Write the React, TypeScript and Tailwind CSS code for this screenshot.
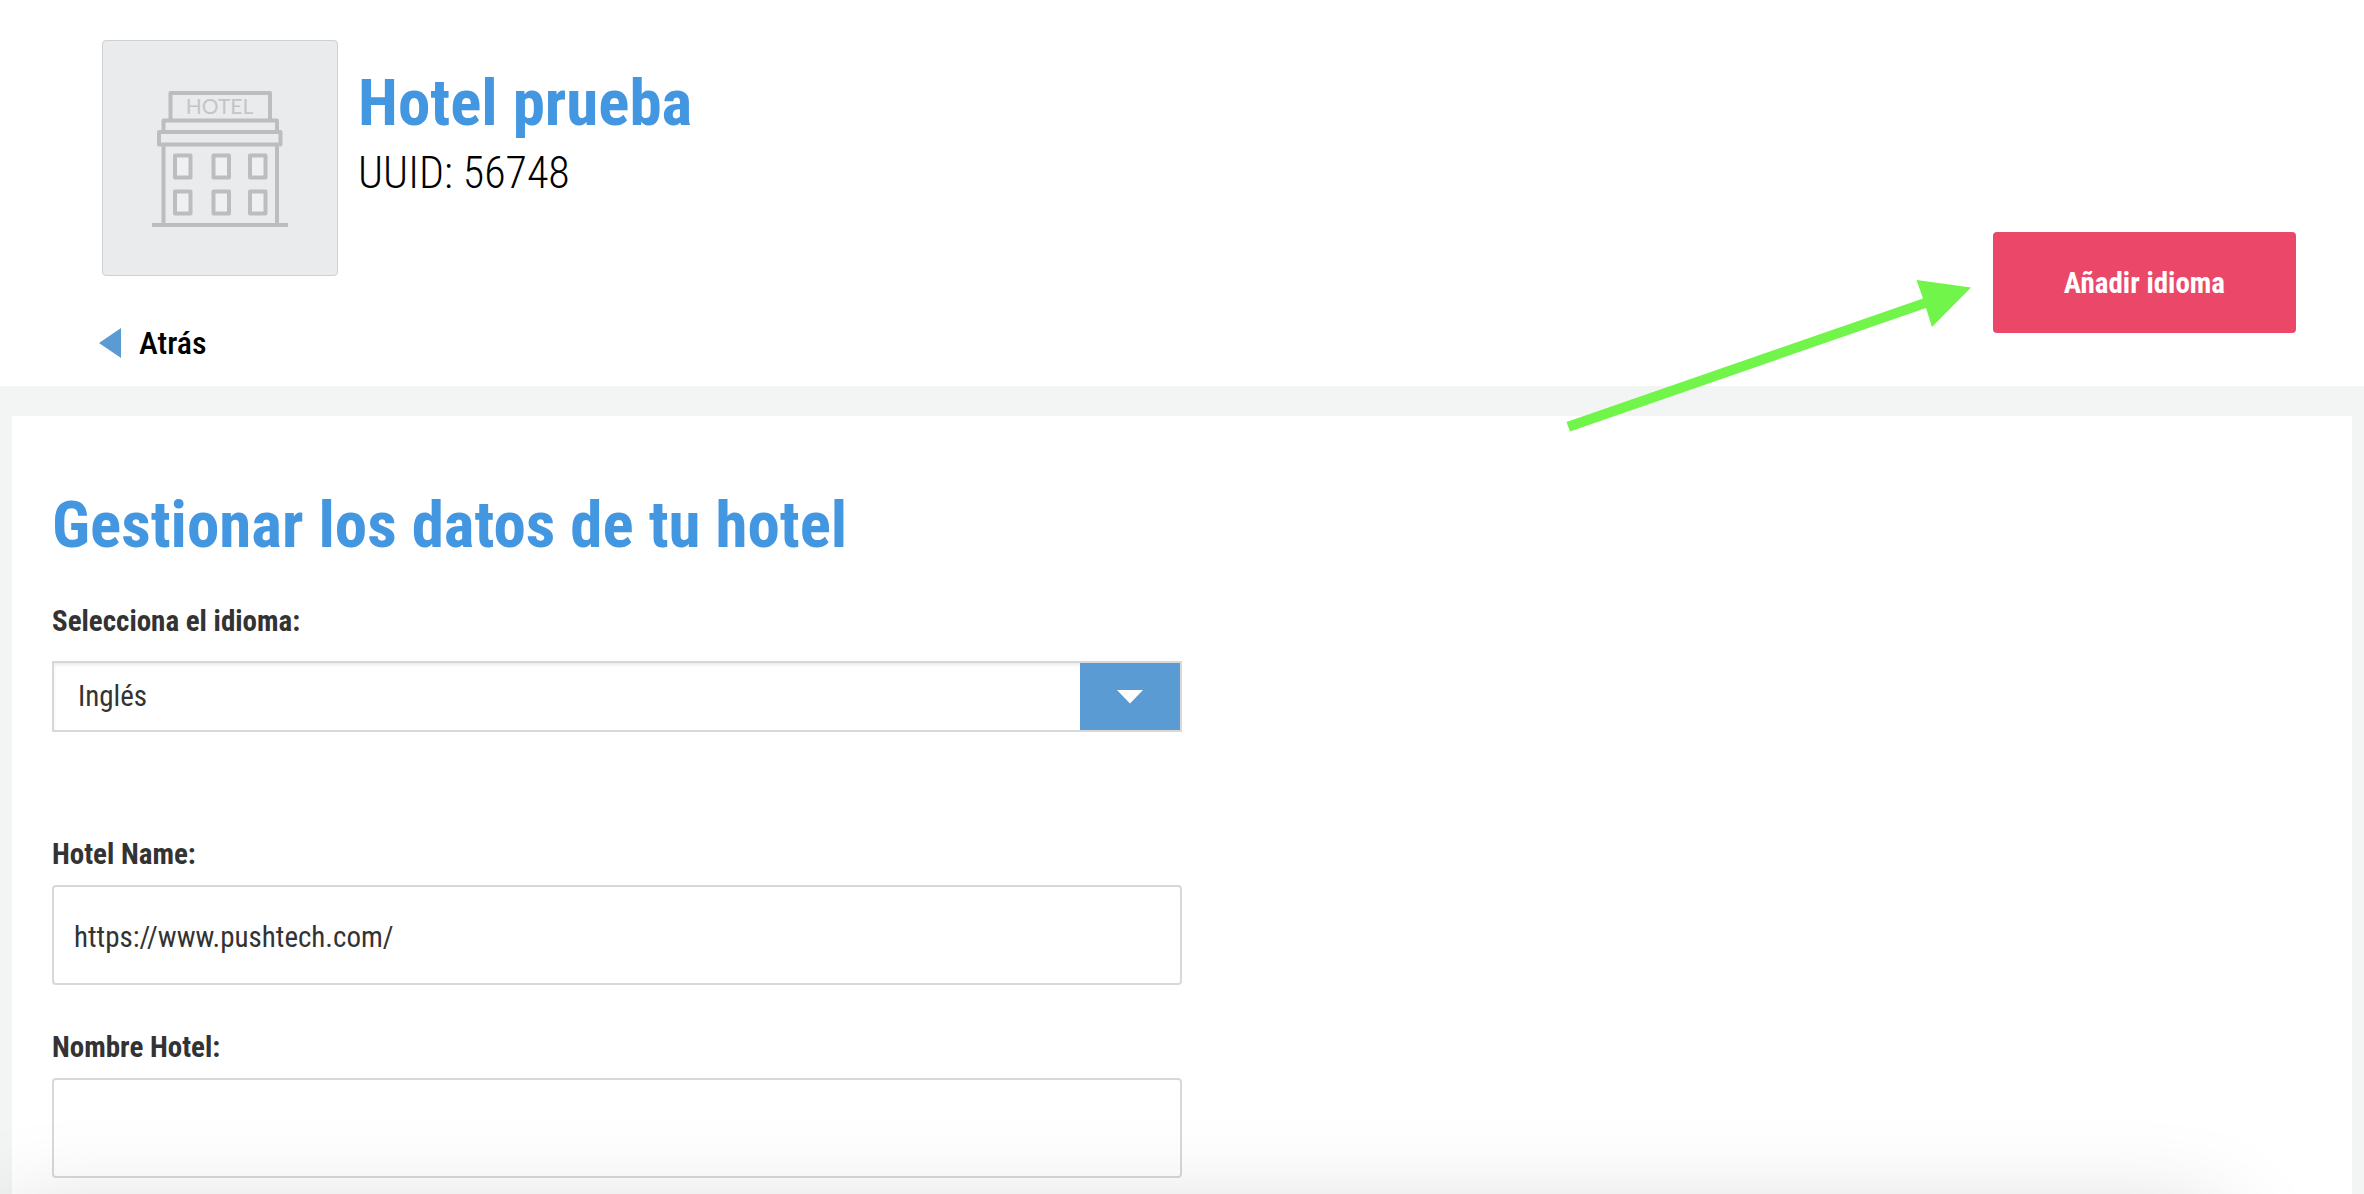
import React, { useState } from 'react';

const HotelIcon: React.FC = () => (
    <svg className="h-[138px] w-[138px]" viewBox="0 -1 138 138" fill="none" stroke="#bcbdbf" strokeWidth="4" strokeLinejoin="round" aria-hidden="true">
        <path d="M19.5 29V3h99.500v26" />
        <path d="M12.500 43V30.500h113.500V43" />
        <path d="M8 42h121.500v12.500H8z" />
        <path d="M12.500 55v79M126 55v79" />
        <path d="M1 135h136" />
        <g fill="#eff0f2">
            <path d="M24 65.500h15.500v22H24zM62.500 65.500H78v22H62.500zM99 65.500h15.500v22H99z" />
            <path d="M24 101.500h15.500v22H24zM62.500 101.500H78v22H62.500zM99 101.500h15.500v22H99z" />
        </g>
        <text x="68.500" y="23.500" textAnchor="middle" fontFamily="Lato, sans-serif" fontSize="21" fill="#c4c5c7" stroke="none">HOTEL</text>
    </svg>
);

// Green pointer that leads the eye to the "Añadir idioma" button
const Arrow: React.FC = () => (
    <svg className="pointer-events-none absolute -left-[427px] top-[46px] h-[154px] w-[406px]" viewBox="0 0 406 154" fill="#72f54a" aria-hidden="true">
        <path d="M0.500 144L357 20.500 350.500 2 405 9.500 366 49 360 30 4 153.500z" />
    </svg>
);

interface TextFieldProps {
    id: string;
    label: string;
    value: string;
    onChange: (value: string) => void;
}

const TextField: React.FC<TextFieldProps> = ({ id, label, value, onChange }) => (
    <div className="flex flex-col gap-[11px]">
        <label htmlFor={id} className="text-[29px] leading-10 font-bold">{label}</label>
        <input
            id={id}
            type="text"
            value={value}
            onChange={(e) => onChange(e.target.value)}
            className="h-[100px] w-full rounded-sm border-2 border-[#d8d8d8] bg-white px-5 pt-1 text-[29px] outline-none"
        />
    </div>
);

const App: React.FC = () => {
    const [language, setLanguage] = useState<string>('en');
    const [hotelName, setHotelName] = useState<string>('https://www.pushtech.com/');
    const [nombreHotel, setNombreHotel] = useState<string>('');

    return (
        <div className="flex min-h-screen flex-col bg-[#f3f5f4] font-['Roboto_Condensed','Roboto',sans-serif] text-[#333333]">
            <header className="flex items-end justify-between bg-white pt-10 pr-[68px] pb-[19px] pl-[102px]">
                <div>
                    <div className="flex gap-5">
                        <div className="flex h-[236px] w-[236px] items-center justify-center rounded-sm border border-[#cfd0d2] bg-[#eaebed]">
                            <HotelIcon />
                        </div>
                        <div className="pt-[25px]">
                            <h1 className="text-[65px] leading-[76px] font-bold text-[#4396e0]">Hotel prueba</h1>
                            <p className="text-[44px] leading-[64px] font-light text-black">UUID: 56748</p>
                        </div>
                    </div>
                    <a href="#" className="-ml-[3px] mt-[43px] flex items-center gap-[18px] text-[32px] leading-[48px] font-medium text-black">
                        <svg className="h-[30px] w-[22px]" viewBox="0 0 22 30" fill="#5a9bd3" aria-hidden="true">
                            <path d="M22 0v30L0 15z" />
                        </svg>
                        Atrás
                    </a>
                </div>
                <div className="relative mb-[34px]">
                    <Arrow />
                    <button type="button" className="h-[101px] rounded-sm bg-[#eb4869] px-[71px] pt-0.5 text-[29px] font-bold text-white">Añadir idioma</button>
                </div>
            </header>

            <main className="mx-3 mt-[30px] flex-1 bg-white px-10 pt-[69px] pb-[15px]">
                <h2 className="text-[65px] leading-[80px] font-bold text-[#4396e0]">Gestionar los datos de tu hotel</h2>
                <form className="mt-9 w-1/2">
                    <div className="mb-[102px] flex flex-col gap-5">
                        <label htmlFor="language" className="text-[29px] leading-10 font-bold">Selecciona el idioma:</label>
                        <div className="relative">
                            <select
                                id="language"
                                value={language}
                                onChange={(e) => setLanguage(e.target.value)}
                                className="h-[71px] w-full appearance-none border-2 border-[#d8d8d8] bg-white px-6 text-[29px] shadow-[inset_0_2px_3px_rgba(0,0,0,0.08)] outline-none"
                            >
                                <option value="en">Inglés</option>
                                <option value="es">Español</option>
                            </select>
                            <span className="pointer-events-none absolute inset-y-0.5 right-0.5 flex w-[100px] items-center justify-center bg-[#5a9bd3]">
                                <svg className="h-[14px] w-[26px]" viewBox="0 0 26 14" fill="#ffffff" aria-hidden="true">
                                    <path d="M0 0h26L13 13.500z" />
                                </svg>
                            </span>
                        </div>
                    </div>
                    <div className="flex flex-col gap-[42px]">
                        <TextField id="hotel-name" label="Hotel Name:" value={hotelName} onChange={setHotelName} />
                        <TextField id="nombre-hotel" label="Nombre Hotel:" value={nombreHotel} onChange={setNombreHotel} />
                    </div>
                </form>
            </main>

            {/* soft shade along the bottom edge of the window */}
            <div className="pointer-events-none fixed right-36 -bottom-[120px] left-0 h-24 shadow-[0_0_100px_rgba(0,0,0,0.18)]" />
        </div>
    );
};

export default App;
